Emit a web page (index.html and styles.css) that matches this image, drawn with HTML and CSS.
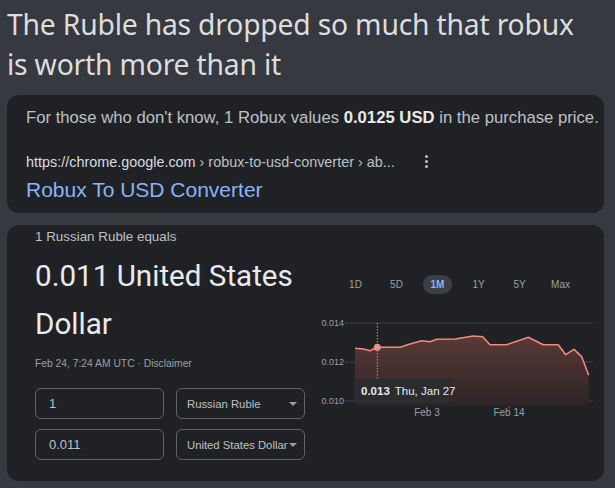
FILE: index.html
```html
<!DOCTYPE html>
<html>
<head>
<meta charset="utf-8">
<link rel="stylesheet" href="styles.css">
</head>
<body>
<div class="title">The Ruble has dropped so much that robux is worth more than it</div>

<div class="card card-result">
  <p class="snippet">For those who don't know, 1 Robux values <b>0.0125 USD</b> in the purchase price.</p>
  <div class="url-row">
    <span class="url"><span class="host">https://chrome.google.com</span> › robux-to-usd-converter › ab...</span>
    <span class="kebab"><i></i><i></i><i></i></span>
  </div>
  <div class="link">Robux To USD Converter</div>
</div>

<div class="card card-conv">
  <div class="left">
    <div class="equals">1 Russian Ruble equals</div>
    <div class="big">0.011 United States Dollar</div>
    <div class="date">Feb 24, 7:24 AM UTC · Disclaimer</div>
    <div class="form">
      <div class="field">1</div>
      <div class="select">Russian Ruble <span class="arrow"></span></div>
      <div class="field">0.011</div>
      <div class="select">United States Dollar <span class="arrow"></span></div>
    </div>
  </div>
  <div class="right">
    <div class="tabs">
      <span class="tab">1D</span>
      <span class="tab">5D</span>
      <span class="tab active">1M</span>
      <span class="tab">1Y</span>
      <span class="tab">5Y</span>
      <span class="tab">Max</span>
    </div>
    <svg class="chart" width="285" height="115" viewBox="0 0 285 115">
      <defs>
        <linearGradient id="fill" x1="0" y1="0" x2="0" y2="1">
          <stop offset="0" stop-color="#5a3a37"/>
          <stop offset="1" stop-color="#2c2324"/>
        </linearGradient>
      </defs>
      <g class="grid">
        <line x1="30" y1="18" x2="278" y2="18"/>
        <line x1="30" y1="57" x2="278" y2="57"/>
        <line x1="30" y1="96" x2="278" y2="96"/>
      </g>
      <g class="ylab">
        <text x="29" y="21">0.014</text>
        <text x="29" y="60">0.012</text>
        <text x="29" y="99">0.010</text>
      </g>
      <polygon fill="url(#fill)" points="40,43.3 48.3,44 55,45.7 62.3,42.3 85,42.3 95,39 106.7,35.7 115,36.7 121.7,34.3 140,34 158.3,31 167.7,31.7 175,39.7 191.7,39.7 213.3,32.3 228.3,39.7 243.3,39.7 250.7,49.7 259,44.3 266.7,51.7 273.7,70.3 273.7,101 40,101"/>
      <polyline class="line" points="40,43.3 48.3,44 55,45.7 62.3,42.3 85,42.3 95,39 106.7,35.7 115,36.7 121.7,34.3 140,34 158.3,31 167.7,31.7 175,39.7 191.7,39.7 213.3,32.3 228.3,39.7 243.3,39.7 250.7,49.7 259,44.3 266.7,51.7 273.7,70.3"/>
      <line class="cursor" x1="62.3" y1="18" x2="62.3" y2="74"/>
      <circle cx="62.3" cy="42.3" r="3.5" fill="#f28b82"/>
      <g class="ticks">
        <line x1="112" y1="101" x2="112" y2="104"/>
        <line x1="194" y1="101" x2="194" y2="104"/>
      </g>
      <g class="xlab">
        <text x="112" y="111">Feb 3</text>
        <text x="194" y="111">Feb 14</text>
      </g>
      <rect class="tip" x="39" y="74" width="99" height="24" rx="2"/>
      <text class="tiptext" x="46" y="90"><tspan font-weight="bold" fill="#e8eaed">0.013</tspan> <tspan dx="2">Thu, Jan 27</tspan></text>
    </svg>
  </div>
</div>
</body>
</html>
```

FILE: styles.css
```css
* { box-sizing: border-box; }
html, body { margin: 0; padding: 0; }
body {
  background: #36393f;
  width: 615px;
  height: 488px;
  overflow: hidden;
  font-family: "Liberation Sans", Arial, sans-serif;
}
.title {
  font-family: "Noto Sans", "Open Sans", sans-serif;
  font-size: 28.3px;
  line-height: 40px;
  color: #dcddde;
  padding: 4px 0 0 7px;
  width: 590px;
  letter-spacing: -0.2px;
}
.card {
  background: #202124;
  border-radius: 12px;
  margin: 0 11px 0 7px;
  width: 597px;
}
.card-result {
  margin-top: 11px;
  height: 118px;
  padding: 13px 0 0 19px;
}
.snippet {
  margin: 0;
  font-size: 16.7px;
  line-height: 20px;
  color: #bdc1c6;
  white-space: nowrap;
}
.snippet b { color: #e8eaed; }
.url-row {
  display: flex;
  align-items: center;
  margin-top: 25px;
  height: 17px;
}
.url {
  font-size: 14.4px;
  color: #bdc1c6;
}
.url .host { color: #dadce0; }
.kebab {
  display: flex;
  flex-direction: column;
  gap: 2px;
  margin-left: 30px;
}
.kebab i {
  display: block;
  width: 3px;
  height: 3px;
  border-radius: 50%;
  background: #bdc1c6;
}
.link {
  margin-top: 7px;
  font-size: 21px;
  line-height: 25px;
  color: #8ab4f8;
}
.card-conv {
  margin-top: 12px;
  height: 256px;
  padding: 4px 0 0 28px;
  display: grid;
  grid-template-columns: 270px 1fr;
  column-gap: 10px;
}
.equals {
  font-size: 13.4px;
  line-height: 16px;
  color: #bdc1c6;
}
.big {
  font-family: "Roboto", "Open Sans", sans-serif;
  font-size: 29.6px;
  line-height: 48px;
  color: #e8eaed;
  margin-top: 7px;
  width: 270px;
}
.date {
  margin-top: 9px;
  font-size: 10.3px;
  line-height: 14px;
  color: #9aa0a6;
}
.form {
  margin-top: 17px;
  display: grid;
  grid-template-columns: 129px 129px;
  column-gap: 12px;
  row-gap: 10px;
}
.field, .select {
  height: 31px;
  border: 1px solid #5f6368;
  border-radius: 6px;
  display: flex;
  align-items: center;
  color: #bdc1c6;
}
.field {
  padding-left: 13px;
  font-size: 13px;
}
.select {
  padding: 0 7px 0 10px;
  font-size: 11.3px;
  justify-content: space-between;
  white-space: nowrap;
}
.arrow {
  width: 0;
  height: 0;
  border-left: 4px solid transparent;
  border-right: 4px solid transparent;
  border-top: 4px solid #9aa0a6;
  margin-left: 2px;
}
.right { display: flex; flex-direction: column; }
.tabs {
  margin-top: 46px;
  margin-left: 26px;
  display: flex;
  gap: 12px;
}
.tab {
  width: 29px;
  height: 19px;
  border-radius: 10px;
  font-size: 10px;
  color: #9aa0a6;
  display: flex;
  align-items: center;
  justify-content: center;
}
.tab.active {
  background: #3c4043;
  color: #8ab4f8;
  font-weight: bold;
}
.chart { margin-top: 11px; display: block; }
.grid line { stroke: #3c4043; stroke-width: 1; }
.ylab text {
  font-size: 9px;
  fill: #9aa0a6;
  text-anchor: end;
}
.line { fill: none; stroke: #ee8a80; stroke-width: 1.6; stroke-linejoin: round; }
.cursor { stroke: #9aa0a6; stroke-width: 1; stroke-dasharray: 1.5 1.5; }
.ticks line { stroke: #5f6368; }
.xlab text {
  font-size: 10px;
  fill: #9aa0a6;
  text-anchor: middle;
}
.tip { fill: #2b2c2f; }
.tiptext { font-size: 11.5px; fill: #e8eaed; }
```
